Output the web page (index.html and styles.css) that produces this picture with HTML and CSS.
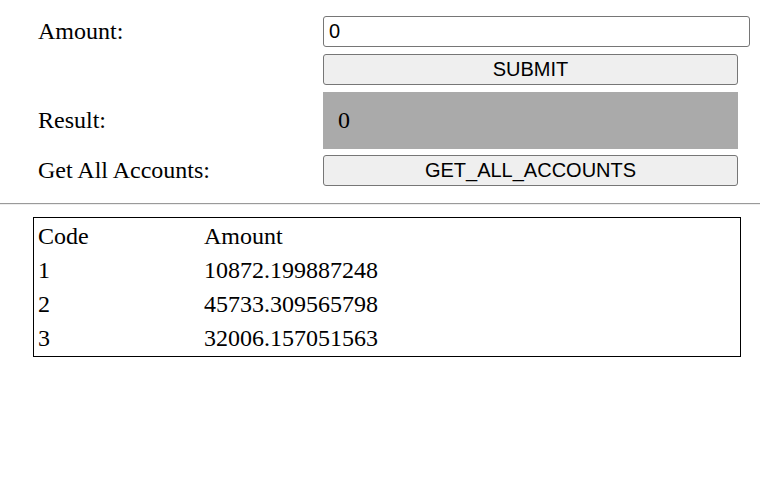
FILE: index.html
```html
<!DOCTYPE html>
<html>
<head>
<meta charset="utf-8">
<link rel="stylesheet" href="styles.css">
</head>
<body>
<div class="form">
  <div class="row row-input">
    <label class="label">Amount:</label>
    <input class="amount-input" type="text" value="0">
  </div>
  <div class="row">
    <span class="label"></span>
    <button class="btn">SUBMIT</button>
  </div>
  <div class="row row-result">
    <span class="label">Result:</span>
    <div class="result">0</div>
  </div>
  <div class="row">
    <span class="label">Get All Accounts:</span>
    <button class="btn">GET_ALL_ACCOUNTS</button>
  </div>
</div>
<hr class="divider">
<table class="accounts">
  <tr><td class="col-code">Code</td><td>Amount</td></tr>
  <tr><td class="col-code">1</td><td>10872.199887248</td></tr>
  <tr><td class="col-code">2</td><td>45733.309565798</td></tr>
  <tr><td class="col-code">3</td><td>32006.157051563</td></tr>
</table>
</body>
</html>
```

FILE: styles.css
```css
html, body {
  margin: 0;
  padding: 0;
  background: #fff;
}
body {
  font-family: "Liberation Serif", "Times New Roman", serif;
  font-size: 24px;
  color: #000;
}
.form {
  padding: 16px 0 0 38px;
  display: flex;
  flex-direction: column;
  gap: 7px;
}
.row {
  display: flex;
  align-items: center;
}
.row-result {
  margin-bottom: -1px;
}
.label {
  width: 285px;
  flex: none;
}
.amount-input {
  box-sizing: border-box;
  width: 427px;
  height: 31px;
  margin: 0;
  padding: 0 5px;
  border: 1px solid #767676;
  border-radius: 3px;
  font-family: "Liberation Sans", Arial, sans-serif;
  font-size: 20px;
  color: #000;
  background: #fff;
}
.btn {
  box-sizing: border-box;
  width: 415px;
  height: 31px;
  margin: 0;
  padding: 0;
  border: 1px solid #767676;
  border-radius: 3px;
  background: #efefef;
  font-family: "Liberation Sans", Arial, sans-serif;
  font-size: 20px;
  color: #000;
}
.result {
  box-sizing: border-box;
  width: 415px;
  height: 57px;
  background: #aaaaaa;
  padding-left: 15px;
  display: flex;
  align-items: center;
}
.divider {
  margin: 17px 0 0 0;
  border: none;
  border-top: 1px solid #9a9a9a;
  border-bottom: 1px solid #eeeeee;
  height: 0;
}
.accounts {
  margin: 12px 0 0 33px;
  width: 708px;
  border: 1px solid #000;
  border-spacing: 2px;
}
.accounts td {
  padding: 3px 1px 2px 1px;
  text-align: left;
  vertical-align: middle;
}
.accounts .col-code {
  padding-left: 2px;
  width: 162px;
}
```
